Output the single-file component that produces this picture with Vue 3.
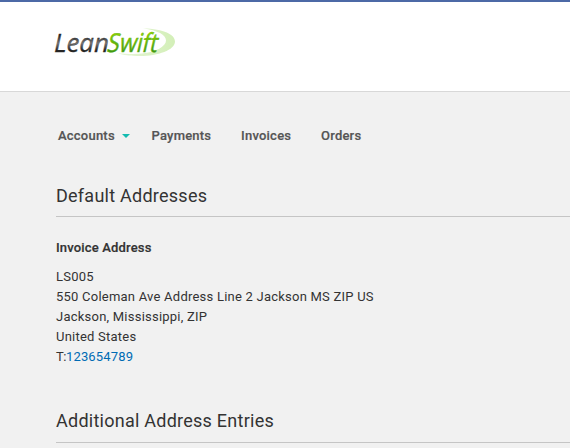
<script setup>
const nav = ['Accounts', 'Payments', 'Invoices', 'Orders']
const address = ['LS005', '550 Coleman Ave Address Line 2 Jackson MS ZIP US', 'Jackson, Mississippi, ZIP', 'United States']
</script>

<template>
  <div class="page">
    <header class="header">
      <svg class="logo" width="124" height="40" viewBox="0 -2 124 40">
        <defs>
          <linearGradient id="dark" x1="0" y1="0" x2="0" y2="1"><stop offset=".3" stop-color="#1c1c1c" /><stop offset=".55" stop-color="#777" /><stop offset=".75" stop-color="#222" /></linearGradient>
          <linearGradient id="green" x1="0" y1="0" x2="0" y2="1"><stop offset=".25" stop-color="#92d400" /><stop offset=".8" stop-color="#3a9416" /></linearGradient>
          <linearGradient id="swoosh" x1="0" y1="0" x2="1" y2="0"><stop offset="0" stop-color="#e6f5d6" /><stop offset="1" stop-color="#d3efb8" /></linearGradient>
        </defs>
        <path fill="url(#swoosh)" d="M89 1.3C110 2 121 7.5 121 14.5C121 23 104 29 86 29C76 29 69 28 64 26.2C74 27.2 82 27.2 88 26.5C102 25 112 19.5 112 13.5C112 8 104 3.5 89 1.3Z" />
        <text class="lean" x="0" y="24.5" textLength="55" lengthAdjust="spacingAndGlyphs">Lean</text>
        <text class="swift" transform="translate(52 24.5) skewX(-13)" x="0" y="0" textLength="50.5" lengthAdjust="spacingAndGlyphs">Swift</text>
      </svg>
    </header>
    <nav class="nav">
      <a v-for="(n, i) in nav" :key="n" class="link" :class="{ parent: i === 0 }">{{ n }}<i v-if="i === 0" class="caret"></i></a>
    </nav>
    <main class="content">
      <h2 class="title">Default Addresses</h2>
      <section class="box">
        <strong class="label">Invoice Address</strong>
        <address class="address">
          <div v-for="l in address" :key="l">{{ l }}</div>
          <div class="phone">T:<a class="tel">123654789</a></div>
        </address>
      </section>
      <h2 class="title">Additional Address Entries</h2>
    </main>
  </div>
</template>

<style>
body { margin: 0; background: #f1f1f1; overflow: hidden; }
</style>
<style scoped>
.page { height: 448px; overflow: hidden; background: #f1f1f1; color: #333; font-family: Roboto, sans-serif; }
.header { box-sizing: border-box; height: 92px; padding: 23px 0 0 54px; background: #fff; border-top: 2px solid #4c69a6; border-bottom: 1px solid #d8d8d8; }
.logo { display: block; overflow: visible; }
.lean, .swift { font: italic 26px/1 "Open Sans", sans-serif; fill: url(#dark); stroke: #333; stroke-width: .3px; }
.swift { font-style: normal; fill: url(#green); stroke: #65b60e; stroke-width: .5px; }
.nav { box-sizing: border-box; display: flex; gap: 30px; padding: 33px 0 0 58px; height: 85px; }
.link { display: flex; align-items: center; height: 20px; font-size: 13px; font-weight: 500; letter-spacing: .22px; margin-right: -.22px; color: #555; -webkit-text-stroke: .2px #555; }
.parent { width: 63.7px; white-space: nowrap; }
.caret { flex: none; margin: 2px 0 0 7px; border: 4px solid transparent; border-top: 4px solid #14bbb0; border-bottom: 0; }
.content { padding-left: 56px; }
.title { box-sizing: border-box; height: 40px; margin: 0; padding-top: 8px; border-bottom: 1px solid #c5c5c5; font-size: 18px; line-height: 22px; font-weight: 400; letter-spacing: .25px; }
.box + .title { height: 41px; }
.box { height: 185px; padding-top: 21px; box-sizing: border-box; }
.label { display: block; font-size: 13px; line-height: 20px; font-weight: 500; letter-spacing: .17px; -webkit-text-stroke: .2px #333; }
.address { margin-top: 9px; font-size: 13px; line-height: 20px; font-style: normal; letter-spacing: .23px; }
.phone { letter-spacing: -.5px; }
.tel { color: #006bb4; letter-spacing: .18px; }
</style>
